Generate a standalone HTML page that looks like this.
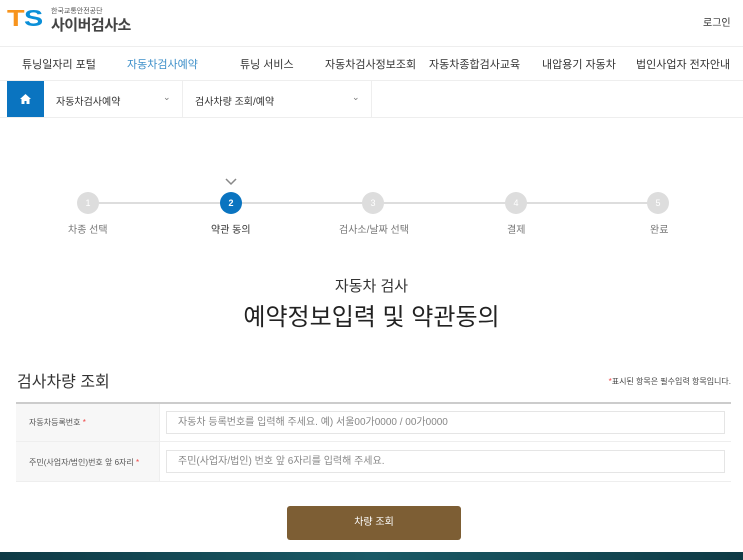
<!DOCTYPE html>
<html><head><meta charset="utf-8"><style>
*{margin:0;padding:0;box-sizing:border-box}
body{width:743px;height:560px;overflow:hidden;background:#fff;font-family:"Liberation Sans","Noto Sans CJK KR",sans-serif;color:#333;position:relative}
.a{position:absolute;white-space:nowrap}
</style></head><body>
<div class="a" style="left:7px;top:6px;font-weight:bold;font-size:23px;letter-spacing:-0.5px;line-height:24px;transform:scaleX(1.25);transform-origin:left"><span style="color:#f7941d">T</span><span style="color:#0a8fd8">S</span></div>
<div class="a" style="left:51px;top:6px;font-size:7px;color:#555">한국교통안전공단</div>
<div class="a" style="left:51px;top:14px;font-size:15px;color:#444;font-weight:bold;letter-spacing:-0.5px">사이버검사소</div>
<div class="a" style="left:703px;top:14px;font-size:10px;color:#333">로그인</div>
<div class="a" style="left:0;top:46px;width:743px;border-top:1px solid #eee"></div>
<div class="a" style="top:56px;font-size:11px;left:22px">튜닝일자리 포털</div>
<div class="a" style="top:56px;font-size:11px;left:127px;color:#3d8fc9">자동차검사예약</div>
<div class="a" style="top:56px;font-size:11px;left:240px">튜닝 서비스</div>
<div class="a" style="top:56px;font-size:11px;left:325px">자동차검사정보조회</div>
<div class="a" style="top:56px;font-size:11px;left:429px">자동차종합검사교육</div>
<div class="a" style="top:56px;font-size:11px;left:542px">내압용기 자동차</div>
<div class="a" style="top:56px;font-size:11px;left:636px">법인사업자 전자안내</div>
<div class="a" style="left:0;top:80px;width:743px;border-top:1px solid #eee"></div>
<div class="a" style="left:0;top:117px;width:743px;border-top:1px solid #eee"></div>
<div class="a" style="left:7px;top:81px;width:37px;height:36px;background:#0a74c0"></div>
<svg class="a" style="left:20px;top:94px" width="11" height="10" viewBox="0 0 11 10"><path d="M5.5 0L0 5h1.5v5h3V7h2v3h3V5H11z" fill="#fff"/></svg>
<div class="a" style="left:56px;top:93px;font-size:10px">자동차검사예약</div>
<div class="a" style="left:163px;top:92px;font-size:9px;color:#777">⌄</div>
<div class="a" style="left:182px;top:81px;height:36px;border-left:1px solid #eee"></div>
<div class="a" style="left:195px;top:93px;font-size:10px">검사차량 조회/예약</div>
<div class="a" style="left:352px;top:92px;font-size:9px;color:#777">⌄</div>
<div class="a" style="left:371px;top:81px;height:36px;border-left:1px solid #eee"></div>
<svg class="a" style="left:225px;top:178px" width="12" height="8"><path d="M1 1l5 5 5-5" stroke="#888" stroke-width="1.5" fill="none"/></svg>
<div class="a" style="left:88px;top:202px;width:570px;height:2px;background:#ddd"></div>
<div class="a" style="left:77px;top:192px;width:22px;height:22px;border-radius:50%;background:#ddd;color:#fff;font-size:9px;text-align:center;line-height:22px">1</div>
<div class="a" style="left:220px;top:192px;width:22px;height:22px;border-radius:50%;background:#0a74c0;color:#fff;font-size:9px;font-weight:bold;text-align:center;line-height:22px">2</div>
<div class="a" style="left:362px;top:192px;width:22px;height:22px;border-radius:50%;background:#ddd;color:#fff;font-size:9px;text-align:center;line-height:22px">3</div>
<div class="a" style="left:505px;top:192px;width:22px;height:22px;border-radius:50%;background:#ddd;color:#fff;font-size:9px;text-align:center;line-height:22px">4</div>
<div class="a" style="left:647px;top:192px;width:22px;height:22px;border-radius:50%;background:#ddd;color:#fff;font-size:9px;text-align:center;line-height:22px">5</div>
<div class="a" style="left:68px;top:221px;font-size:10px;color:#777">차종 선택</div>
<div class="a" style="left:211px;top:221px;font-size:10px;color:#333">약관 동의</div>
<div class="a" style="left:339px;top:221px;font-size:10px;color:#777">검사소/날짜 선택</div>
<div class="a" style="left:507px;top:221px;font-size:10px;color:#777">결제</div>
<div class="a" style="left:650px;top:221px;font-size:10px;color:#777">완료</div>
<div class="a" style="left:0;width:743px;text-align:center;top:275px;font-size:15px">자동차 검사</div>
<div class="a" style="left:0;width:743px;text-align:center;top:297px;font-size:24px;color:#222">예약정보입력 및 약관동의</div>
<div class="a" style="left:17px;top:368px;font-size:16px;color:#333">검사차량 조회</div>
<div class="a" style="right:12px;top:376px;font-size:8px;color:#444"><span style="color:#e44">*</span>표시된 항목은 필수입력 항목입니다.</div>
<div class="a" style="left:16px;top:402px;width:715px;height:2px;background:#ccc"></div>
<div class="a" style="left:16px;top:404px;width:143px;height:77px;background:#f7f7f7"></div>
<div class="a" style="left:16px;top:441px;width:715px;border-top:1px solid #eee"></div>
<div class="a" style="left:16px;top:481px;width:715px;border-top:1px solid #eee"></div>
<div class="a" style="left:159px;top:404px;height:77px;border-left:1px solid #eee"></div>
<div class="a" style="left:29px;top:417px;font-size:8px;color:#555">자동차등록번호 <span style="color:#e44">*</span></div>
<div class="a" style="left:29px;top:457px;font-size:8px;color:#555">주민(사업자/법인)번호 앞 6자리 <span style="color:#e44">*</span></div>
<div class="a" style="left:166px;top:411px;width:559px;height:23px;border:1px solid #e5e5e5;font-size:10px;color:#888;padding:2px 11px;line-height:18px">자동차 등록번호를 입력해 주세요. 예) 서울00가0000 / 00가0000</div>
<div class="a" style="left:166px;top:450px;width:559px;height:23px;border:1px solid #e5e5e5;font-size:10px;color:#888;padding:2px 11px;line-height:18px">주민(사업자/법인) 번호 앞 6자리를 입력해 주세요.</div>
<div class="a" style="left:287px;top:506px;width:174px;height:34px;background:#7d5e34;border-radius:3px;color:#fff;font-size:10px;text-align:center;line-height:34px">차량 조회</div>
<div class="a" style="left:0;top:552px;width:743px;height:8px;background:linear-gradient(90deg,#0e3a45,#1a5a66,#0e3a45)"></div>
</body></html>
